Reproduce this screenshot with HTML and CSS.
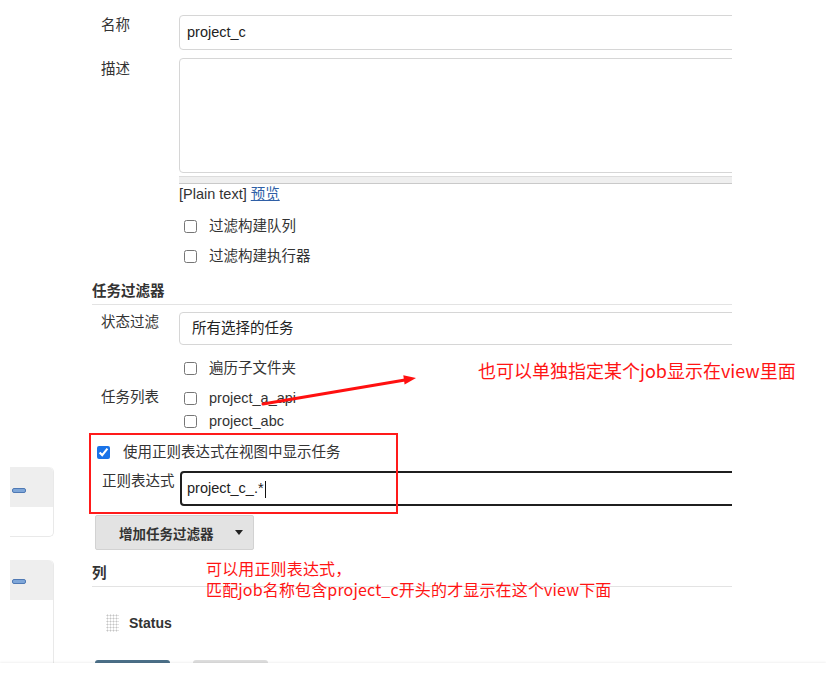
FILE: index.html
```html
<!DOCTYPE html>
<html lang="zh-CN">
<head>
<meta charset="utf-8">
<title>View config</title>
<link rel="stylesheet" href="styles.css">
</head>
<body>
<div class="page">
  <aside class="side">
    <div class="card">
      <div class="card-head"><span class="minus"></span></div>
      <div class="card-body"></div>
    </div>
    <div class="card card-2">
      <div class="card-head"><span class="minus"></span></div>
      <div class="card-body tall"></div>
    </div>
  </aside>

  <main class="main">
    <div class="row row-name">
      <div class="label">名称</div>
      <div class="field"><div class="input">project_c</div></div>
    </div>

    <div class="row row-desc">
      <div class="label label-desc">描述</div>
      <div class="field">
        <div class="textarea"></div>
        <div class="resize"></div>
        <div class="plain">[Plain text] <a class="link" href="#">预览</a></div>
        <div class="checks checks-top">
          <label class="check"><input type="checkbox"><span>过滤构建队列</span></label>
          <label class="check"><input type="checkbox"><span>过滤构建执行器</span></label>
        </div>
      </div>
    </div>

    <div class="section-title">任务过滤器</div>

    <div class="row row-status">
      <div class="label">状态过滤</div>
      <div class="field"><div class="select">所有选择的任务</div></div>
    </div>

    <div class="row row-recurse">
      <div class="label"></div>
      <div class="field">
        <label class="check"><input type="checkbox"><span>遍历子文件夹</span></label>
      </div>
    </div>

    <div class="row row-jobs">
      <div class="label">任务列表</div>
      <div class="field">
        <div class="checks checks-jobs">
          <label class="check"><input type="checkbox"><span>project_a_api</span></label>
          <label class="check"><input type="checkbox"><span>project_abc</span></label>
        </div>
      </div>
    </div>

    <label class="check check-regex"><input type="checkbox" checked><span>使用正则表达式在视图中显示任务</span></label>

    <div class="row row-regex">
      <div class="label label-regex">正则表达式</div>
      <div class="field"><div class="input input-focus">project_c_.*<span class="caret-line"></span></div></div>
    </div>

    <button class="add-btn" type="button"><span>增加任务过滤器</span><span class="tri"></span></button>

    <div class="section-title section-cols">列</div>

    <div class="col-item">
      <span class="grip"></span>
      <span class="col-name">Status</span>
    </div>

    <div class="bottom-btns">
      <span class="btn-primary"></span>
      <span class="btn-secondary"></span>
    </div>
  </main>
</div>

<div class="footer"></div>

<div class="redbox"></div>
<svg class="arrow" width="826" height="683" viewBox="0 0 826 683">
  <line x1="263" y1="404" x2="405" y2="380" stroke="#ff1010" stroke-width="3" stroke-linecap="round"/>
  <polygon points="416,378 404.6,384.6 403.3,375.2" fill="#ff1010"/>
</svg>
<div class="note note-1">也可以单独指定某个job显示在view里面</div>
<div class="note note-2">可以用正则表达式，<br>匹配job名称包含project_c开头的才显示在这个view下面</div>
</body>
</html>
```

FILE: styles.css
```css
* { box-sizing: border-box; }
html, body { margin: 0; padding: 0; }
body {
  width: 826px;
  height: 683px;
  overflow: hidden;
  background: #fff;
  font-family: "Liberation Sans", Arial, "Noto Sans CJK SC", sans-serif;
  font-size: 14.5px;
  color: #333;
  position: relative;
}

.page { display: flex; align-items: flex-start; }

/* side panel */
.side { width: 54px; flex: none; padding-left: 10px; padding-top: 467px; }
.card {
  border-right: 1px solid #e9e9e9;
  border-bottom: 1px solid #e9e9e9;
  border-radius: 0 5px 5px 0;
  background: #fff;
}
.card-head {
  height: 40px;
  background: #eeeeee;
  border-top-right-radius: 5px;
  padding: 21px 0 0 2px;
}
.card-2 .card-head { padding-top: 19px; }
.minus {
  display: block;
  width: 14px;
  height: 5px;
  background: #7ea6d8;
  border: 1px solid #4f79b4;
  border-radius: 2px;
}
.card-body { height: 29px; }
.card-2 { margin-top: 23px; border-bottom: none; }
.card-body.tall { height: 80px; }

/* main form */
.main { flex: none; margin-left: 38px; width: 640px; overflow: hidden; }
.row { display: flex; align-items: flex-start; }
.label { width: 87px; flex: none; padding-left: 9px; line-height: 20px; color: #333; }
.field { flex: 1; min-width: 0; }

.row-name { margin-top: 15px; }
.input {
  width: calc(100% + 12px);
  height: 35px;
  border: 1px solid #d6d6d6;
  border-radius: 4px;
  padding: 0 7px;
  line-height: 33px;
  color: #222;
  white-space: nowrap;
}

.row-desc { margin-top: 8px; }
.label-desc { padding-top: 1px; }
.textarea {
  width: calc(100% + 12px);
  height: 115px;
  border: 1px solid #d6d6d6;
  border-radius: 4px 0 0 4px;
}
.resize {
  width: calc(100% + 12px);
  margin-top: 3px;
  height: 8px;
  background: #efefef;
  border-top: 1px solid #dcdcdc;
  border-bottom: 1px solid #c9c9c9;
}
.plain { line-height: 20px; height: 20px; color: #333; }
.link { color: #2f5fa6; text-decoration: underline; }

.checks { display: flex; flex-direction: column; }
.checks-top { margin-top: 12px; gap: 10px; }
.checks-jobs { gap: 3px; }
.check {
  display: flex;
  align-items: center;
  height: 20px;
  gap: 12px;
  padding-left: 5px;
  line-height: 20px;
  color: #333;
}
.check input { margin: 0; width: 13px; height: 13px; flex: none; }

.section-title {
  margin-top: 15px;
  font-weight: bold;
  line-height: 20px;
  padding-bottom: 3px;
  border-bottom: 1px solid #e3e3e3;
  color: #333;
}

.row-status { margin-top: 7px; }
.select {
  width: calc(100% + 12px);
  height: 33px;
  border: 1px solid #d6d6d6;
  border-radius: 4px;
  padding-left: 12px;
  line-height: 31px;
  color: #222;
}

.row-recurse { margin-top: 13px; }
.row-jobs { margin-top: 10px; }
.row-jobs .label { margin-top: -1px; }

.check-regex { margin-top: 11px; gap: 13px; }
.check-regex input { accent-color: #1a73e8; }

.row-regex { margin-top: 9px; }
.label-regex { width: 88px; padding-left: 10px; }
.input-focus {
  border: 2px solid #1f1f1f;
  padding-left: 5px;
  line-height: 31px;
  color: #222;
}
.caret-line {
  display: inline-block;
  width: 1px;
  height: 17px;
  background: #111;
  vertical-align: middle;
  margin-left: 1px;
}

.add-btn {
  display: flex;
  align-items: center;
  margin: 9px 0 0 3px;
  width: 159px;
  height: 35px;
  padding: 0 0 0 23px;
  background: #e3e3e3;
  border: 1px solid #d2d2d2;
  border-radius: 2px;
  font-family: "Noto Sans CJK SC", sans-serif;
  font-size: 13.5px;
  font-weight: 600;
  color: #333;
}
.tri {
  margin-left: 21px;
  width: 0;
  height: 0;
  border-left: 4px solid transparent;
  border-right: 4px solid transparent;
  border-top: 5px solid #222;
}

.section-cols { margin-top: 13px; }

.col-item {
  margin-top: 26px;
  display: flex;
  align-items: center;
  height: 20px;
  padding-left: 14px;
  gap: 10px;
}
.grip {
  width: 13px;
  height: 18px;
  background-image: radial-gradient(circle, #c4c4c4 0.9px, transparent 1.1px);
  background-size: 3px 3px;
}
.col-name { font-weight: bold; font-size: 14px; color: #333; }

.bottom-btns { margin-top: 27px; display: flex; gap: 23px; padding-left: 3px; }
.btn-primary { width: 75px; height: 20px; background: #4c7089; border-radius: 3px 3px 0 0; }
.btn-secondary { width: 75px; height: 20px; background: #dedede; border-radius: 3px 3px 0 0; }

.footer {
  position: absolute;
  left: 0;
  top: 663px;
  width: 826px;
  height: 20px;
  background: #fff;
  box-shadow: 0 -1px 2px rgba(0, 0, 0, 0.06);
}

/* annotations */
.redbox {
  position: absolute;
  left: 89px;
  top: 433px;
  width: 309px;
  height: 81px;
  border: 2px solid #ff1a1a;
}
.arrow { position: absolute; left: 0; top: 0; pointer-events: none; }
.note {
  position: absolute;
  color: #ff1414;
  font-family: "Noto Sans CJK SC", sans-serif;
  white-space: nowrap;
}
.note-1 { left: 478px; top: 358px; font-size: 18px; line-height: 24px; }
.note-2 { left: 206px; top: 558px; font-size: 16px; line-height: 21px; letter-spacing: 0.15px; }
```
